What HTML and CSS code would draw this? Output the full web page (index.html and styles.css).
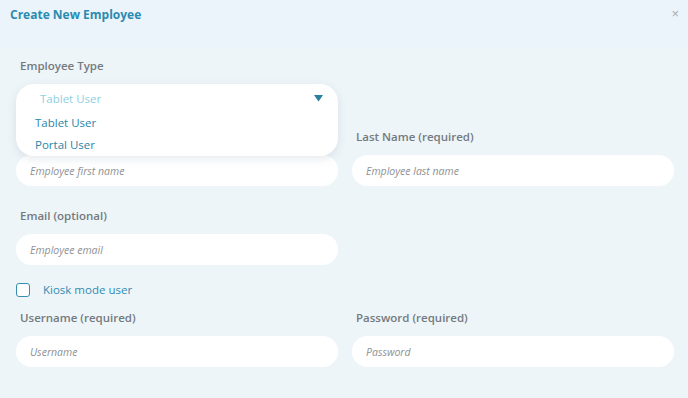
FILE: index.html
```html
<!doctype html>
<html lang="en">
<head>
    <link rel="stylesheet" href="styles.css">
    <meta charset="UTF-8">
    <title>Create New Employee</title>
</head>
<body>
    <div class="modal">
        <div class="modal-head">
            <h2>Create New Employee</h2>
            <button class="close" type="button">&#215;</button>
        </div>

        <form class="modal-body">
            <!-- Employee type (menu open) -->
            <div class="grid type-row">
                <div class="field">
                    <label>Employee Type</label>
                    <div class="select">
                        <div class="select-menu">
                            <div class="select-value">
                                <span>Tablet User</span>
                                <svg width="9" height="7" viewBox="0 0 9 7"><path d="M0 0h9L4.5 6.5z" fill="#2b7f9e"/></svg>
                            </div>
                            <div class="option">Tablet User</div>
                            <div class="option">Portal User</div>
                        </div>
                    </div>
                </div>
            </div>

            <div class="grid">
                <div class="field">
                    <!-- label sits under the open menu -->
                    <label class="covered">First Name (required)</label>
                    <input type="text" placeholder="Employee first name">
                </div>
                <div class="field">
                    <label>Last Name (required)</label>
                    <input type="text" placeholder="Employee last name">
                </div>
            </div>

            <div class="grid">
                <div class="field">
                    <label>Email (optional)</label>
                    <input type="text" placeholder="Employee email">
                </div>
            </div>

            <label class="check">
                <span class="box"></span>
                Kiosk mode user
            </label>

            <div class="grid">
                <div class="field">
                    <label>Username (required)</label>
                    <input type="text" placeholder="Username">
                </div>
                <div class="field">
                    <label>Password (required)</label>
                    <input type="password" placeholder="Password">
                </div>
            </div>
        </form>
    </div>
</body>
</html>
```

FILE: styles.css
```css
body {
    margin: 0;
    font-family: "Open Sans", sans-serif;
    background-color: #eef5f9;
}

.modal {
    width: 688px;
    height: 398px;
    background-color: #eef5f9;
}

.modal-head {
    height: 47px;
    box-sizing: border-box;
    padding: 6px 9px 0 10px;
    display: flex;
    justify-content: space-between;
    align-items: flex-start;
    background-color: #ecf4fb;
}

.modal-head h2 {
    margin: 0;
    font-size: 12px;
    line-height: 17px;
    font-weight: 700;
    color: #2a8bb0;
}

.close {
    border: none;
    background: none;
    padding: 0;
    font-size: 13px;
    line-height: 16px;
    color: #a4adb3;
    cursor: pointer;
}

.modal-body {
    padding: 11px 14px 0 16px;
}

.grid {
    display: grid;
    grid-template-columns: 1fr 1fr;
    column-gap: 14px;
    margin-bottom: 22px;
}

.type-row {
    margin-bottom: 14px;
}

.field label {
    display: block;
    height: 16px;
    line-height: 16px;
    margin: 0 0 10px 4px;
    font-size: 11.5px;
    font-weight: 600;
    color: #747a7e;
}

.field label.covered {
    visibility: hidden;
}

.field input {
    display: block;
    width: 100%;
    height: 31px;
    box-sizing: border-box;
    border: none;
    border-radius: 16px;
    background-color: #fff;
    padding: 0 14px;
    font-family: "Open Sans", sans-serif;
    font-size: 10.5px;
    outline: none;
}

.field input::placeholder {
    font-style: italic;
    color: #8d9194;
}

.select {
    position: relative;
    height: 31px;
}

.select-menu {
    position: absolute;
    top: 0;
    left: 0;
    right: 0;
    z-index: 2;
    height: 72px;
    background-color: #fff;
    border-radius: 18px;
    box-shadow: 0 3px 10px rgba(60, 90, 110, 0.13);
}

.select-value {
    display: flex;
    justify-content: space-between;
    align-items: center;
    height: 28px;
    padding: 0 15px 0 24px;
    font-size: 11.5px;
    color: #8fcfe0;
}

.option {
    height: 22px;
    line-height: 22px;
    padding-left: 19px;
    font-size: 11.5px;
    font-weight: 500;
    color: #2a86a8;
}

.check {
    display: flex;
    align-items: center;
    gap: 13px;
    height: 15px;
    margin: -5px 0 13px;
    font-size: 11.5px;
    color: #2e8cb0;
}

.check .box {
    width: 12px;
    height: 12px;
    border: 1.5px solid #3a8fae;
    border-radius: 3px;
    background-color: #fff;
}
```
